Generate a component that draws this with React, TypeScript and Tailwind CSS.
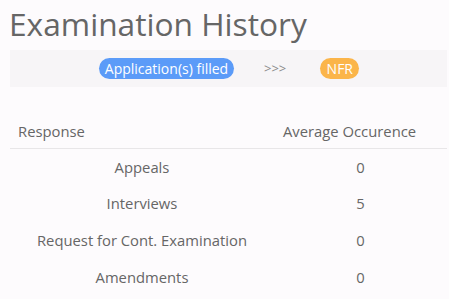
export default function App() {
  const rows = [
    ["Appeals", "0"],
    ["Interviews", "5"],
    ["Request for Cont. Examination", "0"],
    ["Amendments", "0"],
  ];
  return (
    <div
      className="w-[449px] h-[299px] overflow-hidden bg-[#fdfbfd] text-[#666]"
      style={{ fontFamily: '"Open Sans", sans-serif' }}
    >
      <h1 className="pl-[9px] pt-[2px] text-[31.7px] leading-[43px] text-[#666]">Examination History</h1>
      <div className="ml-[10px] mr-[2px] mt-[5px] h-[37px] bg-[#f7f5f7] flex items-center text-[14px]">
        <span className="ml-[89px] h-[21px] w-[135px] whitespace-nowrap rounded-full bg-[#5b9bf8] text-white leading-[21px] text-center">
          Application(s) filled
        </span>
        <span className="ml-[30px] text-[#8a8a8a] text-[13px]">&gt;&gt;&gt;</span>
        <span className="ml-[34px] h-[21px] w-[39px] rounded-full bg-[#fbb54a] text-white leading-[21px] text-center">
          NFR
        </span>
      </div>
      <table className="ml-[10px] mt-[27px] w-[437px] border-collapse text-[14.8px]">
        <thead>
          <tr className="border-b border-[#e8e6e8]">
            <th className="w-[264px] h-[34px] pl-[8px] text-left font-normal">Response</th>
            <th className="h-[34px] pl-[9px] text-left font-normal">Average Occurence</th>
          </tr>
        </thead>
        <tbody>
          {rows.map(([a, b]) => (
            <tr key={a}>
              <td className="h-[37px] text-center">{a}</td>
              <td className="h-[37px] text-center">{b}</td>
            </tr>
          ))}
        </tbody>
      </table>
    </div>
  );
}
